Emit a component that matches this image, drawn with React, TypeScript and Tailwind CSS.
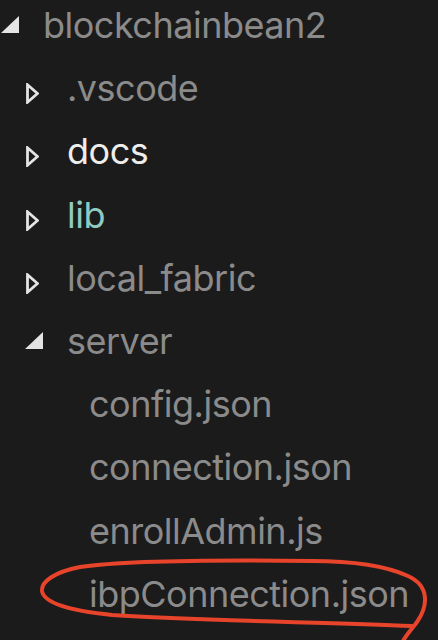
type Row = {
  name: string;
  level: number;
  kind: "open" | "closed" | "file";
  color?: string;
};

const rows: Row[] = [
  { name: "blockchainbean2", level: 0, kind: "open" },
  { name: ".vscode", level: 1, kind: "closed" },
  { name: "docs", level: 1, kind: "closed", color: "text-[#ededed]" },
  { name: "lib", level: 1, kind: "closed", color: "text-[#8fcbc3]" },
  { name: "local_fabric", level: 1, kind: "closed" },
  { name: "server", level: 1, kind: "open" },
  { name: "config.json", level: 2, kind: "file" },
  { name: "connection.json", level: 2, kind: "file" },
  { name: "enrollAdmin.js", level: 2, kind: "file" },
  { name: "ibpConnection.json", level: 2, kind: "file" },
];

const indent = ["pl-0", "pl-[24px]", "pl-[46px]"];

function Twistie({ kind }: { kind: Row["kind"] }) {
  if (kind === "file") return <span className="w-[43px] shrink-0" />;
  if (kind === "open") {
    return (
      <span className="w-[43px] shrink-0">
        <svg width="18" height="17" viewBox="0 0 18 17" className="mt-[22px] ml-[1px]">
          <polygon points="0,17 18,17 18,0" fill="#e4e4e4" />
        </svg>
      </span>
    );
  }
  return (
    <span className="w-[43px] shrink-0">
      <svg width="13" height="21" viewBox="0 0 13 21" className="mt-[26px] ml-[2px]">
        <polygon
          points="1.5,1.8 11.5,10.5 1.5,19.2"
          fill="none"
          stroke="#e4e4e4"
          strokeWidth="2.8"
        />
      </svg>
    </span>
  );
}

export default function App() {
  return (
    <div className="relative w-[438px] h-[640px] overflow-hidden bg-[#1b1b1b] font-['Inter',_'Liberation_Sans',_sans-serif]">
      <div className="-mt-[6px] flex flex-col">
        {rows.map((r) => (
          <div
            key={r.name}
            className={`flex items-start h-[63.2px] leading-[63.2px] text-[36px] tracking-[-0.5px] ${indent[r.level]}`}
          >
            <Twistie kind={r.kind} />
            <span className={`whitespace-nowrap ${r.color ?? "text-[#8b8b8b]"}`}>{r.name}</span>
          </div>
        ))}
      </div>

      {/* hand-drawn red circle around the last file */}
      <svg
        className="absolute inset-0 pointer-events-none"
        width="438"
        height="640"
        viewBox="0 0 438 640"
      >
        <path
          d="M403 641 C407 634 412 629 417 622 C428 606 430 586 408 576 C386 566 350 561 312 561 C230 560 130 560 80 567 C54 572 41 582 42 591 C44 603 70 611 112 615 C200 621 320 622 412 626"
          fill="none"
          stroke="#e8442b"
          strokeWidth="4"
          strokeLinecap="round"
          strokeLinejoin="round"
        />
      </svg>
    </div>
  );
}
